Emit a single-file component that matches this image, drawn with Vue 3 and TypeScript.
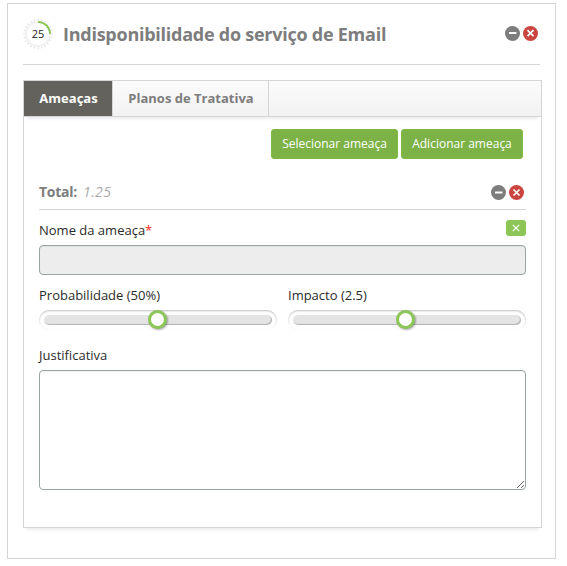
<script setup lang="ts">
import { ref } from 'vue'

interface Slider {
  label: string
  position: number
}

const title = 'Indisponibilidade do serviço de Email'
const score = 25
const tabs = ['Ameaças', 'Planos de Tratativa']
const activeTab = ref(0)
const threatName = ref('')
const justification = ref('')
const sliders: Slider[] = [
  { label: 'Probabilidade (50%)', position: 50 },
  { label: 'Impacto (2.5)', position: 49.6 },
]
const ticks = Array.from({ length: 24 }, (_, i) => i * 15)
</script>

<template>
  <section class="card">
    <header class="card-head">
      <svg class="gauge" viewBox="0 0 30 30">
        <line v-for="a in ticks" :key="a" x1="15" y1="0.2" x2="15" y2="1.8" stroke="#d9d9d9" stroke-width="1" :transform="`rotate(${a} 15 15)`" />
        <circle cx="15" cy="15" r="12" fill="none" stroke="#f0f0f0" stroke-width="2" />
        <path d="M15 3A12 12 0 0 1 27 15" fill="none" stroke="#8cc657" stroke-width="2" />
        <text x="15" y="19" text-anchor="middle">{{ score }}</text>
      </svg>
      <h1>{{ title }}</h1>
      <div class="actions">
        <svg viewBox="0 0 15 15"><circle cx="7.5" cy="7.5" r="7.5" fill="#7d7d7d" /><path d="M4 7H11.4" stroke="#fff" stroke-width="2" /></svg>
        <svg viewBox="0 0 15 15"><circle cx="7.5" cy="7.5" r="7.5" fill="#cb4540" /><path d="M4.5 4.2L10.5 10.2M10.5 4.2L4.5 10.2" stroke="#fff" stroke-width="1.7" /></svg>
      </div>
    </header>

    <div class="panel">
      <nav class="tabs">
        <button v-for="(t, i) in tabs" :key="t" :class="{ active: i === activeTab }" @click="activeTab = i">{{ t }}</button>
      </nav>
      <div class="body">
        <div class="toolbar">
          <button class="first">Selecionar ameaça</button>
          <button>Adicionar ameaça</button>
        </div>

        <div class="total">
          <strong>Total:</strong><em>1.25</em>
          <div class="actions">
            <svg viewBox="0 0 15 15"><circle cx="7.5" cy="7.5" r="7.5" fill="#7d7d7d" /><path d="M4 7.5H11.4" stroke="#fff" stroke-width="2" /></svg>
            <svg viewBox="0 0 15 15"><circle cx="7.5" cy="7.5" r="7.5" fill="#cb4540" /><path d="M4.5 4.5L10.5 10.5M10.5 4.5L4.5 10.5" stroke="#fff" stroke-width="1.7" /></svg>
          </div>
        </div>

        <div class="name-row">
          <label>Nome da ameaça<span class="req">*</span></label>
          <button class="clear"><svg viewBox="0 0 8 8"><path d="M0.8 0.8L7.2 7.2M7.2 0.8L0.8 7.2" stroke="#fff" stroke-width="1.2" /></svg></button>
        </div>
        <input v-model="threatName" class="name" type="text" disabled />

        <div class="sliders">
          <div v-for="s in sliders" :key="s.label" class="slider">
            <label>{{ s.label }}</label>
            <div class="rail">
              <div class="track"></div>
              <span class="knob" :style="{ left: s.position + '%' }"></span>
            </div>
          </div>
        </div>

        <label class="just">Justificativa</label>
        <textarea v-model="justification"></textarea>
      </div>
    </div>
  </section>
</template>

<style>
body {
  margin: 0;
  background: #fff;
}
</style>

<style scoped>
* {
  box-sizing: border-box;
}
.card {
  width: 549px;
  height: 556px;
  margin: 3px 0 0 7px;
  padding: 0 13px 0 15px;
  border: 1px solid #d5d5d5;
  background: #fff;
  box-shadow: 0 5px 3px -3px rgba(0, 0, 0, 0.12);
  font-family: "Open Sans", "Liberation Sans", sans-serif;
  font-size: 13px;
  line-height: 20px;
  color: #2b2b2b;
  display: flow-root;
}
button {
  font: inherit;
  border: 0;
  padding: 0;
  margin: 0;
}
.card-head {
  width: 517px;
  height: 61px;
  border-bottom: 1px solid #d5d5d5;
  display: flex;
  align-items: center;
}
.gauge {
  width: 30px;
  height: 30px;
}
.gauge text {
  font-size: 11px;
  fill: #222;
}
h1 {
  margin: 0 0 0 10px;
  font-size: 18px;
  font-weight: 700;
  letter-spacing: -0.25px;
  line-height: 24px;
  color: #7d7d7d;
  white-space: nowrap;
}
.actions {
  margin-left: auto;
  display: flex;
  gap: 3px;
  margin-right: 2px;
}
.actions svg {
  display: block;
  width: 15px;
  height: 15px;
}
.card-head .actions {
  margin-top: -2px;
}
.panel {
  width: 519px;
  height: 448px;
  margin-top: 15px;
  border: 1px solid #d5d5d5;
  box-shadow: 0 5px 3px -3px rgba(0, 0, 0, 0.08);
}
.tabs {
  height: 36px;
  display: flex;
  background: linear-gradient(#fbfbfb, #f2f2f2);
  border-bottom: 1px solid #d5d5d5;
  box-shadow: 0 5px 3px -3px rgba(0, 0, 0, 0.08);
}
.tabs button {
  width: 156px;
  padding: 0 0 1px 1px;
  border-right: 1px solid #d5d5d5;
  background: none;
  color: #7d7d7d;
  font-weight: 700;
}
.tabs button.active {
  width: 89px;
  background: #63625d;
  color: #fff;
}
.body {
  padding: 12px 15px 0;
}
.toolbar {
  display: flex;
  justify-content: flex-end;
  gap: 3px;
  padding-right: 3px;
}
.toolbar button {
  width: 122px;
  height: 30px;
  border: 1px solid #7ebb44;
  border-radius: 3px;
  background: #7cb246;
  color: #fff;
  font-size: 12px;
}
.toolbar button.first {
  width: 127px;
}
.total {
  height: 35px;
  margin-top: 16px;
  border-bottom: 1px solid #d5d5d5;
  display: flex;
  align-items: center;
  color: #7d7d7d;
  font-size: 14px;
}
.total strong {
  letter-spacing: -0.25px;
}
.total em {
  margin-left: 6px;
  color: #aaa;
  letter-spacing: 0.4px;
}
.name-row {
  height: 35px;
  display: flex;
  justify-content: space-between;
  padding-top: 10px;
}
.req {
  color: #f22;
}
.clear {
  width: 20px;
  height: 16px;
  border-radius: 3px;
  background: #8cc657;
  display: flex;
  align-items: center;
  justify-content: center;
}
.clear svg {
  width: 8px;
  height: 8px;
}
.name {
  display: block;
  width: 487px;
  height: 30px;
  margin: 0;
  border: 1px solid #98a5a2;
  border-radius: 4px;
  background: #ededed;
  box-shadow: inset 0 1px 1px rgba(0, 0, 0, 0.06);
}
.sliders {
  display: grid;
  grid-template-columns: 238px 238px;
  gap: 11px;
  margin-top: 10px;
}
.slider label,
.just {
  display: block;
}
.rail {
  position: relative;
  height: 20px;
  margin-top: 5px;
  padding: 5px;
  border-radius: 10px;
  box-shadow: inset 0 1px 2px rgba(0, 0, 0, 0.26);
}
.track {
  height: 10px;
  border-radius: 5px;
  background: #e4e4e4;
  box-shadow: inset -1px -1px 1px rgba(0, 0, 0, 0.22);
}
.knob {
  position: absolute;
  top: 0;
  width: 19px;
  height: 19px;
  margin-left: -10px;
  border: 3px solid #8cc657;
  border-radius: 50%;
  background: #fff;
  box-shadow: 1px 1px 2px rgba(0, 0, 0, 0.35);
}
.just {
  margin-top: 15px;
}
textarea {
  display: block;
  width: 487px;
  height: 120px;
  margin: 5px 0 0;
  border: 1px solid #98a5a2;
  border-radius: 4px;
  background: #fff;
  box-shadow: inset 0 1px 1px rgba(0, 0, 0, 0.06);
  resize: both;
  outline: 0;
}
</style>
